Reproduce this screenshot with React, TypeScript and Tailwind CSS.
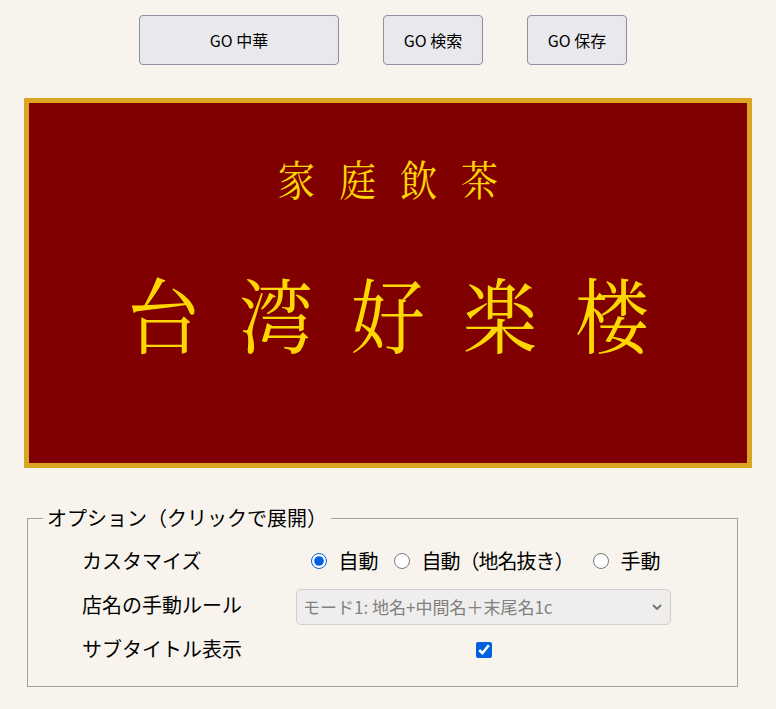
import React, { useState } from "react";

const SERIF =
  "font-['Noto_Serif_CJK_JP','Noto_Serif_JP','Liberation_Serif','Noto_Sans_CJK_JP',serif]";

function App() {
  const [mode, setMode] = useState("auto");
  const [subtitle, setSubtitle] = useState(true);

  return (
    <div className="min-h-[709px] bg-[#f8f4ed] px-6 pt-[15px] text-black font-['Noto_Sans_CJK_JP','Noto_Sans',sans-serif]">
      <div className="flex ml-[115px]">
        {[
          { label: "GO 中華", w: "w-[200px]", m: "" },
          { label: "GO 検索", w: "w-[100px]", m: "ml-[44px]" },
          { label: "GO 保存", w: "w-[100px]", m: "ml-[44px]" },
        ].map((b) => (
          <button
            key={b.label}
            className={`${b.w} ${b.m} h-[50px] rounded-[4px] border border-[#8f8f9d] bg-[#e9e9ed] text-[16px]`}
          >
            {b.label}
          </button>
        ))}
      </div>

      <div className="mt-[33px] h-[370px] w-[728px] border-[5px] border-[#daa520] bg-[#800000] flex flex-col items-center text-[#ffd700]">
        <div
          className={`${SERIF} mt-[50px] text-[37px] leading-[50px] tracking-[24px] pl-[24px] scale-y-[1.15]`}
        >
          家庭飲茶
        </div>
        <div
          className={`${SERIF} mt-[62px] text-[74px] leading-[94px] tracking-[38px] pl-[38px] scale-y-[1.1]`}
        >
          台湾好楽楼
        </div>
      </div>

      <fieldset className="mt-[37px] ml-[3px] w-[711px] h-[182px] border border-[#a0a0a0] pb-[14px]">
        <legend className="ml-[15px] px-[4px] text-[20px] leading-[26px]">
          オプション（クリックで展開）
        </legend>
        <div className="mt-[8px] ml-[54px] grid grid-cols-[214px_375px] text-[20px]">
          <div className="h-[44px] flex items-center">カスタマイズ</div>
          <div className="h-[44px] flex items-center justify-center gap-[15px] pl-[4px]">
            {[
              { v: "auto", t: "自動" },
              { v: "auto2", t: "自動（地名抜き）" },
              { v: "manual", t: "手動" },
            ].map((r, i) => (
              <label
                key={r.v}
                className={`flex items-center gap-[12px] ${i === 2 ? "ml-[4px]" : ""}`}
              >
                <input
                  type="radio"
                  name="mode"
                  checked={mode === r.v}
                  onChange={() => setMode(r.v)}
                  className="w-4 h-4 m-0 accent-[#0060df]"
                />
                <span className={i === 1 ? "tracking-[-1px]" : ""}>{r.t}</span>
              </label>
            ))}
          </div>

          <div className="h-[44px] flex items-center">店名の手動ルール</div>
          <div className="h-[44px] flex items-center pt-[4px]">
            <div className="relative w-[375px]">
              <select
                disabled
                className="w-full h-[36px] appearance-none rounded-[5px] border border-[#cfcfcf] bg-[#efeeec] pl-[6px] text-[17px] text-[#808080]"
              >
                <option>モード1: 地名+中間名＋末尾名1c</option>
              </select>
              <svg
                className="absolute right-[8px] top-[13px] w-[12px] h-[10px]"
                viewBox="0 0 12 10"
                fill="none"
                stroke="#707070"
                strokeWidth="1.8"
              >
                <path d="M2 3l4 4 4-4" />
              </svg>
            </div>
          </div>

          <div className="h-[44px] flex items-center">サブタイトル表示</div>
          <div className="h-[44px] flex items-center justify-center pt-[2px]">
            <input
              type="checkbox"
              checked={subtitle}
              onChange={(e) => setSubtitle(e.target.checked)}
              className="w-4 h-4 m-0 accent-[#0060df]"
            />
          </div>
        </div>
      </fieldset>
    </div>
  );
}

export default App;
